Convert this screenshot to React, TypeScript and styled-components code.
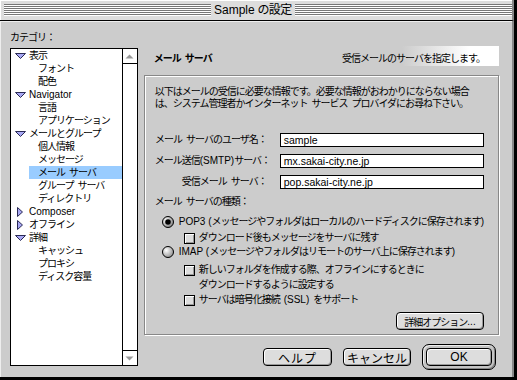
import React from "react";
import styled, { createGlobalStyle } from "styled-components";

const FONT = `"Liberation Sans", "Noto Sans CJK JP", sans-serif`;

const GlobalStyle = createGlobalStyle`
  * { box-sizing: border-box; }
  html, body { margin: 0; padding: 0; background: #cccccc; }
  body { font-family: ${FONT}; font-size: 10px; letter-spacing: -1px; color: #000; }
`;

const Lat = styled.span`
  letter-spacing: 0;
`;

const Window = styled.div`
  width: 517px;
  height: 380px;
  display: flex;
  flex-direction: column;
  background: #cccccc;
  border-right: 3px solid #000;
  border-bottom: 3px solid #000;
  overflow: hidden;
`;

const TitleBar = styled.div`
  height: 21px;
  flex: none;
  display: flex;
  align-items: center;
  padding: 0 0 0 4px;
  background: #dddddd;
  border-bottom: 1px solid #000;
  border-right: 2px solid #888;
  box-shadow: inset 1px 1px 0 #fff;
`;

const Stripes = styled.div<{ $w?: number }>`
  height: 12px;
  width: ${(p) => (p.$w ? `${p.$w}px` : "auto")};
  flex: ${(p) => (p.$w ? "none" : "1")};
  background: repeating-linear-gradient(to bottom, #777 0 1px, #fff 1px 2px);
`;

const TitleText = styled.div`
  font-size: 12px;
  letter-spacing: -0.6px;
  line-height: 20px;
  padding: 0 3px;
  white-space: nowrap;
`;

const Body = styled.div`
  flex: 1;
  display: flex;
  gap: 6px;
  padding: 11px 13px 0 10px;
  border-right: 2px solid #888;
  box-shadow: inset 1px 1px 0 #eee;
`;

const Sidebar = styled.div`
  width: 131px;
  display: flex;
  flex-direction: column;
`;

const CategoryLabel = styled.div`
  line-height: 12px;
  margin-bottom: 4px;
`;

const ListBox = styled.div`
  height: 318px;
  display: flex;
  border: 1px solid #000;
  background: #fff;
`;

const Tree = styled.div`
  flex: 1;
  display: flex;
  flex-direction: column;
`;

const TreeRow = styled.div`
  height: 13px;
  display: flex;
  align-items: stretch;
`;

const TwistySlot = styled.div`
  width: 18px;
  flex: none;
  display: flex;
`;

const TreeLabel = styled.div<{ $indent: number; $selected?: boolean }>`
  flex: 1;
  line-height: 13px;
  padding-left: ${(p) => p.$indent}px;
  white-space: nowrap;
  background: ${(p) => (p.$selected ? "#99ccff" : "transparent")};
`;

const ScrollBar = styled.div`
  width: 15px;
  flex: none;
  border-left: 1px solid #000;
  display: flex;
  flex-direction: column;
  justify-content: space-between;
`;

const ScrollArrow = styled.div<{ $down?: boolean }>`
  height: 15px;
  display: flex;
  align-items: center;
  justify-content: center;
  ${(p) => (p.$down ? "border-top: 1px solid #000;" : "border-bottom: 1px solid #000;")}
`;

const Main = styled.div`
  flex: 1;
  display: flex;
  flex-direction: column;
  padding-top: 14px;
`;

const PanelHeader = styled.div`
  height: 20px;
  display: flex;
  align-items: center;
  justify-content: space-between;
  padding: 3px 14px 0 10px;
  margin-bottom: 9px;
  background: linear-gradient(to right, #cccccc 0, #cccccc 258px, #ffffff 325px, #ffffff 100%);
`;

const PanelTitle = styled.div`
  font-weight: 700;
  white-space: nowrap;
`;

const PanelHint = styled.div`
  white-space: nowrap;
`;

const GroupBox = styled.div`
  height: 260px;
  display: flex;
  flex-direction: column;
  padding: 10px 14px 0 10px;
  border: 1px solid #888;
  box-shadow: inset 1px 1px 0 #fff, 1px 1px 0 #fff;
`;

const Description = styled.div`
  line-height: 12px;
  white-space: nowrap;
`;

const FormGrid = styled.div`
  display: grid;
  grid-template-columns: 112px 204px;
  column-gap: 13px;
  row-gap: 7px;
  margin-top: 23px;
`;

const FieldLabel = styled.div`
  line-height: 14px;
  text-align: right;
  white-space: nowrap;
`;

const TextField = styled.div`
  height: 14px;
  border: 1px solid #000;
  background: #fff;
  padding-left: 3px;
  font-size: 10.5px;
  letter-spacing: 0;
  line-height: 12px;
`;

const SectionLabel = styled.div`
  line-height: 12px;
  margin-top: 7px;
`;

const OptionRow = styled.div<{ $indent: number; $top: number }>`
  display: flex;
  align-items: flex-start;
  margin-left: ${(p) => p.$indent}px;
  margin-top: ${(p) => p.$top}px;
`;

const OptionText = styled.div<{ $gap: number }>`
  line-height: 14px;
  margin-left: ${(p) => p.$gap}px;
  white-space: nowrap;
`;

const TwoLine = styled(OptionText)`
  line-height: 15px;
  margin-top: -1px;
`;

const CheckBox = styled.span`
  width: 11px;
  height: 11px;
  flex: none;
  margin-top: 2px;
  border: 1px solid #000;
  background: #dddddd;
  box-shadow: inset 1px 1px 0 #fff, inset -1px -1px 0 #999;
`;

const RadioWrap = styled.span`
  display: flex;
  flex: none;
  margin-top: 1px;
`;

const ButtonRow = styled.div<{ $top: number; $gap: number }>`
  display: flex;
  justify-content: flex-end;
  align-items: center;
  gap: ${(p) => p.$gap}px;
  margin-top: ${(p) => p.$top}px;
`;

const Footer = styled(ButtonRow)`
  height: 26px;
  padding-right: 3px;
`;

const PushButton = styled.div<{ $w: number; $size?: number; $track?: number }>`
  width: ${(p) => p.$w}px;
  height: 18px;
  display: flex;
  align-items: center;
  justify-content: center;
  border: 1px solid #000;
  border-radius: 4px;
  background: #dddddd;
  box-shadow: inset 1px 1px 0 #fff, inset -1px -1px 0 #999;
  white-space: nowrap;
  font-size: ${(p) => p.$size ?? 10}px;
  letter-spacing: ${(p) => p.$track ?? -1}px;
`;

const DefaultRing = styled.div`
  border: 1px solid #000;
  border-radius: 7px;
  padding: 3px;
  background: #c4c4c4;
  box-shadow: inset 1px 1px 0 #eee, inset -1px -1px 0 #888;
`;

const Twisty = ({ open }: { open: boolean }) => (
  <svg width="18" height="13" viewBox="0 0 18 13">
    {open ? (
      <polygon points="4.5,4.5 14.5,4.5 9.5,9.5" fill="#a8a8f4" stroke="#2a2a55" strokeWidth="1" />
    ) : (
      <polygon points="6.5,2.5 11.5,7 6.5,11.5" fill="#a8a8f4" stroke="#2a2a55" strokeWidth="1" />
    )}
  </svg>
);

const ArrowIcon = ({ down }: { down?: boolean }) => (
  <svg width="9" height="5" viewBox="0 0 9 5">
    <polygon points={down ? "0.5,0.5 8.5,0.5 4.5,4.5" : "0.5,4.5 8.5,4.5 4.5,0.5"} fill="#999" />
  </svg>
);

const Radio = ({ id, checked }: { id: string; checked?: boolean }) => (
  <RadioWrap>
    <svg width="12" height="12" viewBox="0 0 12 12">
      <defs>
        <radialGradient id={id} cx="35%" cy="35%" r="75%">
          <stop offset="0" stopColor="#ffffff" />
          <stop offset="1" stopColor={checked ? "#777" : "#8a8a8a"} />
        </radialGradient>
      </defs>
      <circle cx="6" cy="6" r="5.5" fill={`url(#${id})`} stroke="#000" />
      {checked && <circle cx="6" cy="6" r="2.8" fill="#000" />}
    </svg>
  </RadioWrap>
);

type TreeNode = { label: React.ReactNode; child?: boolean; open?: boolean; selected?: boolean };

const tree: TreeNode[] = [
  { label: "表示", open: true },
  { label: "フォント", child: true },
  { label: "配色", child: true },
  { label: <Lat>Navigator</Lat>, open: true },
  { label: "言語", child: true },
  { label: "アプリケーション", child: true },
  { label: "メールとグループ", open: true },
  { label: "個人情報", child: true },
  { label: "メッセージ", child: true },
  { label: "メール\u2002サーバ", child: true, selected: true },
  { label: "グループ\u2002サーバ", child: true },
  { label: "ディレクトリ", child: true },
  { label: <Lat>Composer</Lat>, open: false },
  { label: "オフライン", open: false },
  { label: "詳細", open: true },
  { label: "キャッシュ", child: true },
  { label: "プロキシ", child: true },
  { label: "ディスク容量", child: true },
];

export default function App() {
  return (
    <>
      <GlobalStyle />
      <Window>
        <TitleBar>
          <Stripes $w={207} />
          <TitleText>
            <Lat>Sample</Lat> の設定
          </TitleText>
          <Stripes />
        </TitleBar>
        <Body>
          <Sidebar>
            <CategoryLabel>カテゴリ：</CategoryLabel>
            <ListBox>
              <Tree>
                {tree.map((n, i) => (
                  <TreeRow key={i}>
                    <TwistySlot>{!n.child && <Twisty open={!!n.open} />}</TwistySlot>
                    <TreeLabel $indent={n.child ? 9 : 0} $selected={n.selected}>
                      {n.label}
                    </TreeLabel>
                  </TreeRow>
                ))}
              </Tree>
              <ScrollBar>
                <ScrollArrow>
                  <ArrowIcon />
                </ScrollArrow>
                <ScrollArrow $down>
                  <ArrowIcon down />
                </ScrollArrow>
              </ScrollBar>
            </ListBox>
          </Sidebar>
          <Main>
            <PanelHeader>
              <PanelTitle>メール&ensp;サーバ</PanelTitle>
              <PanelHint>受信メールのサーバを指定します。</PanelHint>
            </PanelHeader>
            <GroupBox>
              <Description>
                以下はメールの受信に必要な情報です。必要な情報がおわかりにならない場合
                <br />
                は、システム管理者かインターネット&ensp;サービス&ensp;プロバイダにお尋ね下さい。
              </Description>
              <FormGrid>
                <FieldLabel>メール&ensp;サーバのユーザ名：</FieldLabel>
                <TextField>sample</TextField>
                <FieldLabel>
                  メール送信<Lat>(SMTP)</Lat>サーバ：
                </FieldLabel>
                <TextField>mx.sakai-city.ne.jp</TextField>
                <FieldLabel>受信メール&ensp;サーバ：</FieldLabel>
                <TextField>pop.sakai-city.ne.jp</TextField>
              </FormGrid>
              <SectionLabel>メール&ensp;サーバの種類：</SectionLabel>
              <OptionRow $indent={7} $top={7}>
                <Radio id="r-pop" checked />
                <OptionText $gap={5}>
                  <Lat>POP3 (</Lat>メッセージやフォルダはローカルのハードディスクに保存されます<Lat>)</Lat>
                </OptionText>
              </OptionRow>
              <OptionRow $indent={29} $top={2}>
                <CheckBox />
                <OptionText $gap={4}>ダウンロード後もメッセージをサーバに残す</OptionText>
              </OptionRow>
              <OptionRow $indent={7} $top={0}>
                <Radio id="r-imap" />
                <OptionText $gap={5}>
                  <Lat>IMAP (</Lat>メッセージやフォルダはリモートのサーバ上に保存されます<Lat>)</Lat>
                </OptionText>
              </OptionRow>
              <OptionRow $indent={29} $top={4}>
                <CheckBox />
                <TwoLine $gap={4}>
                  新しいフォルダを作成する際、オフラインにするときに
                  <br />
                  ダウンロードするように設定する
                </TwoLine>
              </OptionRow>
              <OptionRow $indent={29} $top={1}>
                <CheckBox />
                <OptionText $gap={4}>
                  サーバは暗号化接続&ensp;<Lat>(SSL)</Lat>&ensp;をサポート
                </OptionText>
              </OptionRow>
              <ButtonRow $top={5} $gap={0}>
                <PushButton $w={88}>
                  詳細オプション<Lat>...</Lat>
                </PushButton>
              </ButtonRow>
            </GroupBox>
            <Footer $top={9} $gap={11}>
              <PushButton $w={69} $size={12} $track={1}>
                ヘルプ
              </PushButton>
              <PushButton $w={68} $size={12} $track={0}>
                キャンセル
              </PushButton>
              <DefaultRing>
                <PushButton $w={66} $size={12} $track={0}>
                  OK
                </PushButton>
              </DefaultRing>
            </Footer>
          </Main>
        </Body>
      </Window>
    </>
  );
}
